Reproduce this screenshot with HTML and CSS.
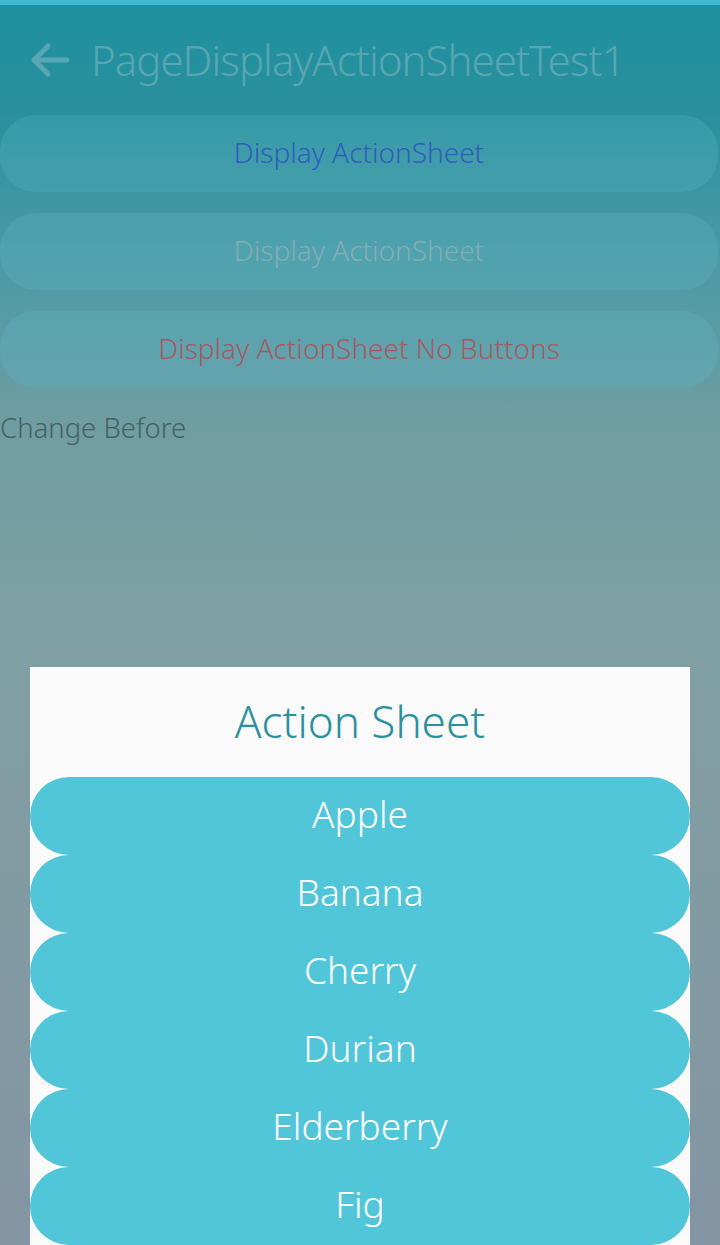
FILE: index.html
```html
<!DOCTYPE html>
<html>
<head>
<meta charset="utf-8">
<link rel="stylesheet" href="styles.css">
</head>
<body>
<div class="screen">
  <div class="topline"></div>
  <header class="header">
    <svg class="back" width="42" height="38" viewBox="0 0 42 38">
      <path d="M38 19 H5 M19 5 L5 19 L19 33" fill="none" stroke="currentColor" stroke-width="5" stroke-linecap="round" stroke-linejoin="round"/>
    </svg>
    <h1 class="title">PageDisplayActionSheetTest1</h1>
  </header>
  <main class="content">
    <div class="btn btn-blue">Display ActionSheet</div>
    <div class="btn btn-grey">Display ActionSheet</div>
    <div class="btn btn-red">Display ActionSheet No Buttons</div>
    <div class="label">Change Before</div>
  </main>
  <div class="sheet">
    <div class="sheet-title">Action Sheet</div>
    <div class="sheet-list">
      <div class="item">Apple</div>
      <div class="item">Banana</div>
      <div class="item">Cherry</div>
      <div class="item">Durian</div>
      <div class="item">Elderberry</div>
      <div class="item">Fig</div>
    </div>
  </div>
</div>
</body>
</html>
```

FILE: styles.css
```css
html, body {
  margin: 0;
  padding: 0;
}
body {
  width: 720px;
  height: 1245px;
  overflow: hidden;
  font-family: "Noto Sans", "Open Sans", sans-serif;
  font-weight: 300;
}
.screen {
  position: relative;
  width: 720px;
  height: 1245px;
  background: linear-gradient(to bottom, #1d91a1 0px, #2a8f9d 110px, #4a9aa5 250px, #6e9da2 420px, #80a0a3 620px, #8495a3 1245px);
  display: flex;
  flex-direction: column;
}
.topline {
  height: 5px;
  background: #3eb7cf;
}
.header {
  height: 110px;
  display: flex;
  align-items: center;
  padding: 0 0 0 29px;
  box-sizing: border-box;
  gap: 20px;
  color: #59a7b1;
}
.back {
  flex: none;
  margin-top: 0px;
}
.title {
  margin: -2px 0 0 0;
  font-size: 42px;
  letter-spacing: -1px;
  font-weight: 300;
  color: #5aa6b0;
  white-space: nowrap;
}
.content {
  display: flex;
  flex-direction: column;
  gap: 21px;
}
.btn {
  height: 77px;
  padding-bottom: 4px;
  box-sizing: border-box;
  border-radius: 36px;
  background: rgba(95, 190, 205, 0.24);
  display: flex;
  align-items: center;
  justify-content: center;
  font-size: 28px;
  margin-right: 2px;
}
.btn-blue { color: #2f5dbd; }
.btn-grey { color: #86acb3; }
.btn-red { color: #a65a60; }
.label {
  margin-top: 0px;
  font-size: 27.5px;
  color: #485f63;
}
.sheet {
  position: absolute;
  left: 30px;
  right: 30px;
  top: 667px;
  bottom: 0;
  background: #fafafa;
  display: flex;
  flex-direction: column;
}
.sheet-title {
  height: 110px;
  display: flex;
  align-items: center;
  justify-content: center;
  font-size: 44px;
  color: #2a91a0;
  padding-bottom: 2px;
  box-sizing: border-box;
}
.sheet-list {
  display: flex;
  flex-direction: column;
}
.item {
  height: 78px;
  border-radius: 39px;
  background: #52c6d9;
  color: #ffffff;
  font-size: 37px;
  display: flex;
  align-items: center;
  justify-content: center;
  padding-bottom: 6px;
  box-sizing: border-box;
}
```
